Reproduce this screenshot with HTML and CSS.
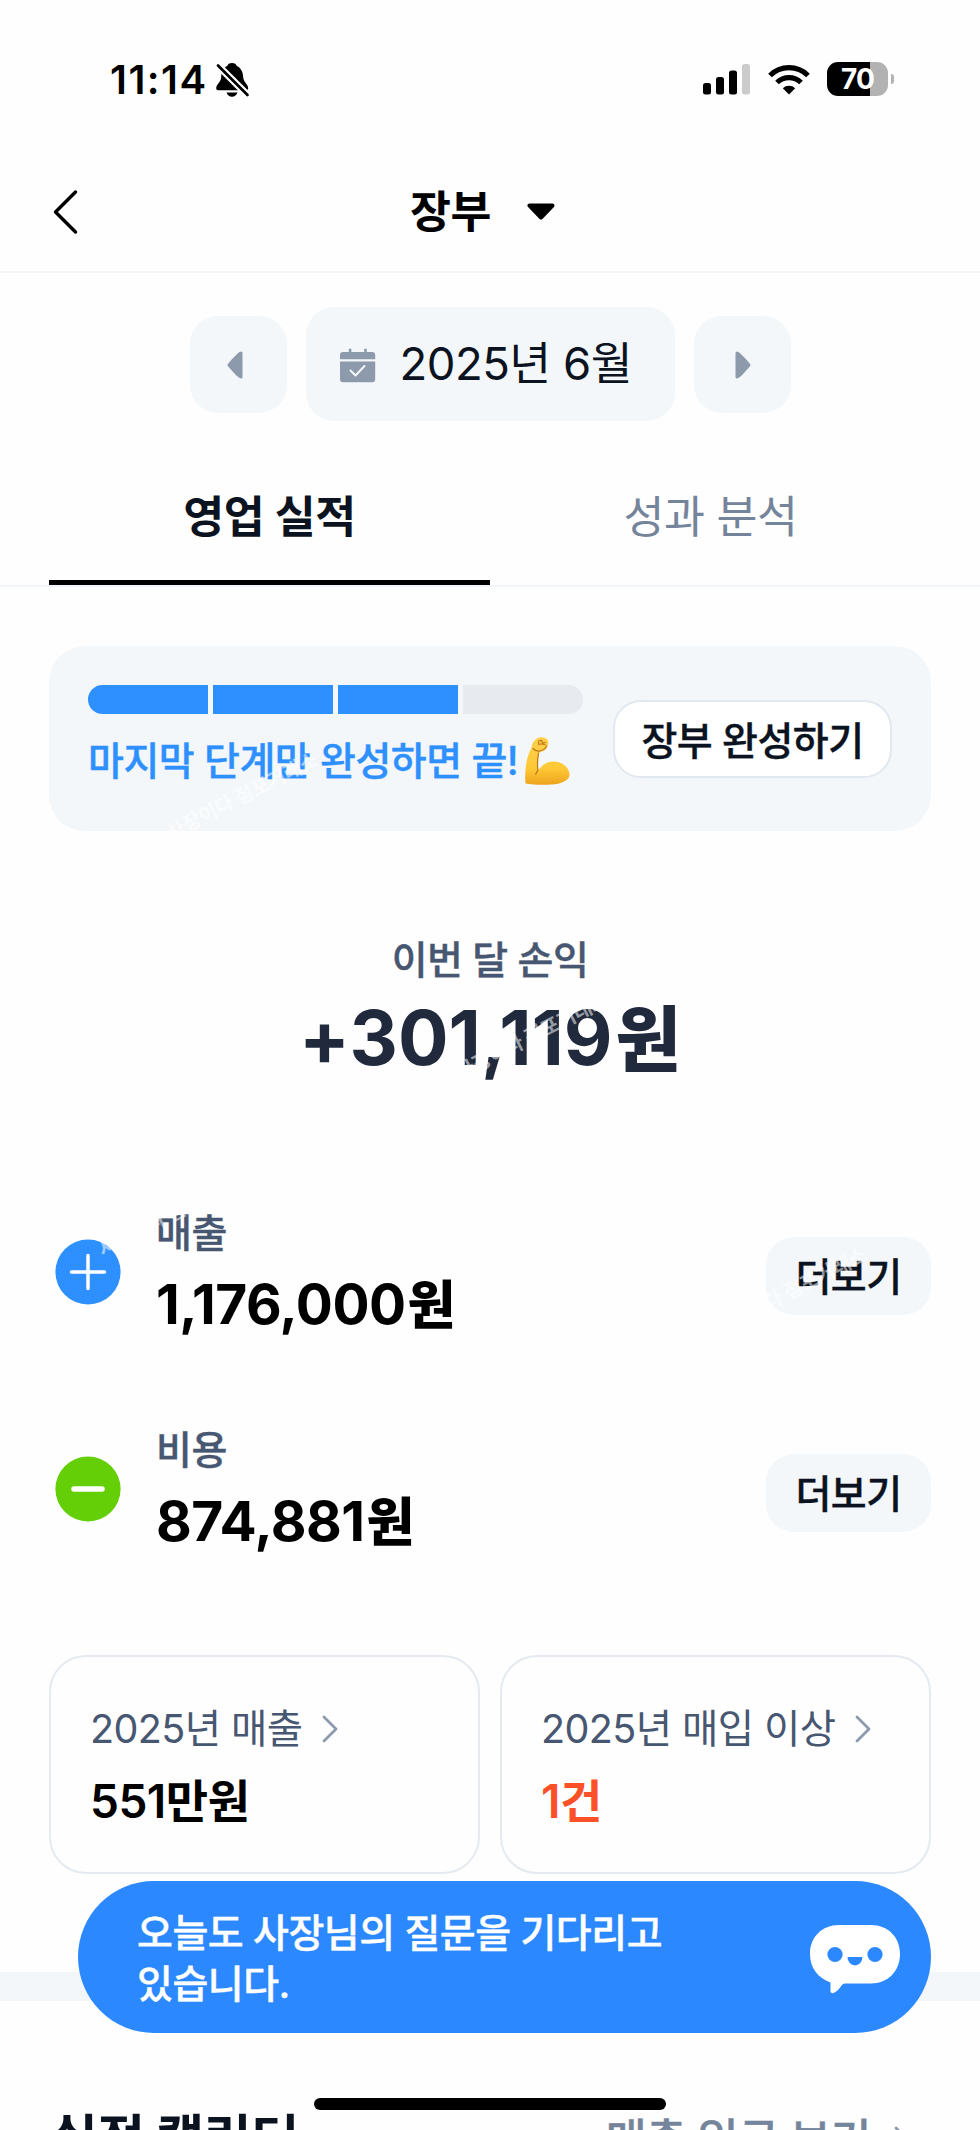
FILE: index.html
```html
<!DOCTYPE html>
<html lang="ko">
<head>
<meta charset="utf-8">
<title>장부</title>
<link rel="stylesheet" href="styles.css">
</head>
<body>
<div class="screen">
  <header class="status">
    <div class="status-left">
      <span class="time">11:14</span>
      <svg class="bell" width="34" height="36" viewBox="0 0 34 36">
        <path d="M16 1c-2.800 0-4 1.300-4.800 3C7 6 5.300 10 5.200 15c0 5-5 7-5 11.200 0 1.300.8 2 2 2h28c1.200 0 2-.7 2-2 0-4.200-5-6.200-5-11.200C27 10 25 6 20.800 4 20 2.300 18.800 1 16 1zM10.500 30.500h11c-.8 2.700-2.800 4.200-5.500 4.200s-4.700-1.500-5.500-4.200z"/>
        <path d="M1 2.500 33 34.500" stroke="#fefefe" stroke-width="7"/>
        <path d="M2 3.500 31.500 33" stroke="#000" stroke-width="2.700" stroke-linecap="round"/>
      </svg>
    </div>
    <div class="status-right">
      <svg width="48" height="31" viewBox="0 0 48 31">
        <rect x="0" y="19" width="8" height="11.500" rx="2.500"/>
        <rect x="13" y="13" width="8" height="17.500" rx="2.500"/>
        <rect x="26" y="6.500" width="8" height="24" rx="2.500"/>
        <rect x="39" y="0" width="8" height="30.500" rx="2.500" fill="#cbcbcb"/>
      </svg>
      <svg class="wifi" width="42" height="31" viewBox="0 0 42 31">
        <g fill="none" stroke="#000" stroke-width="5.200">
          <path d="M2 11.500a27 27 0 0 1 38 0"/>
          <path d="M9 18.500a17 17 0 0 1 24 0"/>
        </g>
        <path d="M14.800 24.200a9 9 0 0 1 12.400 0L21 30.500z"/>
      </svg>
      <div class="battery"><span>70</span></div>
      <i class="nub"></i>
    </div>
  </header>

  <nav class="navbar">
    <svg class="back" width="26" height="46" viewBox="0 0 26 46"><path d="M23.500 3 3.500 23l20 20" fill="none" stroke="#000" stroke-width="3.400" stroke-linecap="round" stroke-linejoin="round"/></svg>
    <h1 class="title">장부</h1>
    <svg class="caret" width="28" height="18" viewBox="0 0 28 18"><path d="M2.500 2.500h23L14 14.500z" stroke="#000" stroke-width="4" stroke-linejoin="round"/></svg>
  </nav>

  <section class="period">
    <button class="step prev"><svg width="16" height="28" viewBox="0 0 16 28"><path d="M14 2v24Q12 26 2 14 12 2 14 2z" class="slate" stroke-width="3" stroke-linejoin="round"/></svg></button>
    <button class="month">
      <svg width="36" height="35" viewBox="0 0 36 35">
        <path d="M8.800 1q1.300-1 2.600 0v3h12.800V1q1.300-1 2.600 0v3h5.400A3 3 0 0 1 35.200 7v4.300H0V7a3 3 0 0 1 3-3h5.800zM0 13.500h35.200V31.200a3 3 0 0 1-3 3H3a3 3 0 0 1-3-3z" fill="#8d9aab"/>
        <path d="m10.500 22.500 5 5 9-9.500" fill="none" stroke="#f3f7fa" stroke-width="2" stroke-linecap="round" stroke-linejoin="round"/>
      </svg>
      <span>2025년 6월</span>
    </button>
    <button class="step next"><svg width="16" height="28" viewBox="0 0 16 28"><path d="M2 2v24Q4 26 14 14 4 2 2 2z" class="slate" stroke-width="3" stroke-linejoin="round"/></svg></button>
  </section>

  <div class="tabs">
    <div class="tab active"><span>영업 실적</span></div>
    <div class="tab"><span>성과 분석</span></div>
  </div>

  <section class="progress-card">
    <div class="progress">
      <div class="bar"><i class="on"></i><i class="on"></i><i class="on"></i><i></i></div>
      <div class="cheer"><span>마지막 단계만 완성하면 끝!</span>
        <svg width="46" height="50" viewBox="0 0 46 50">
          <defs><linearGradient id="skin" x1="0" y1="0" x2="0" y2="1"><stop offset="0" stop-color="#ffd04d"/><stop offset=".65" stop-color="#ffc936"/><stop offset="1" stop-color="#eda31d"/></linearGradient></defs>
          <path d="M1.500 47.500C.5 36 2 21 7.500 12c.2-5 3-9 7.500-10.500 3-1 8.500.5 9 3 .8 3 .3 7-3 9.500-2 1.300-4.500 2-6 3-.8 6-1.500 12.500-.5 17.500 4-6.500 9-9.500 16-9 8 .5 14.500 6 15 12.500.4 5-4.500 8-11.500 9.800C25 49.500 9 49 1.500 47.500z" fill="url(#skin)"/>
          <path d="M14.500 17c-1 6-1.500 12-.5 17.500M14 34.500c-1.300 1-2 2.500-2.300 4M9 12.500c2 2.300 4.500 3 7 2.500 3-.8 6-2.500 6.500-5.500M14.500 5l3-.5 1 2.500 3-.5M16 8l5 .5M14.500 6l.5 3" fill="none" stroke="#bc7818" stroke-width="1.200" stroke-linecap="round"/>
        </svg>
      </div>
    </div>
    <button class="complete">장부 완성하기</button>
  </section>

  <section class="summary">
    <h2>이번 달 손익</h2>
    <p><span>+301,119</span><b>원</b></p>
  </section>

  <section class="flows">
    <div class="flow">
      <svg width="66" height="66" viewBox="0 0 66 66"><circle cx="33" cy="33" r="32.600" fill="#2e90ff"/><path d="M16.500 33h33M33 16.500v33" stroke="#fff" stroke-width="3.500" stroke-linecap="round"/></svg>
      <div class="flow-text"><h3>매출</h3><p><span>1,176,000</span><b>원</b></p></div>
      <button class="more">더보기</button>
    </div>
    <div class="flow">
      <svg width="66" height="66" viewBox="0 0 66 66"><circle cx="33" cy="33" r="32.600" fill="#64cf06"/><path d="M19 33h28" stroke="#fff" stroke-width="5.500" stroke-linecap="round"/></svg>
      <div class="flow-text"><h3>비용</h3><p><span>874,881</span><b>원</b></p></div>
      <button class="more">더보기</button>
    </div>
  </section>

  <section class="year">
    <div class="year-card">
      <div class="year-head"><span>2025년 매출</span><svg width="16" height="28" viewBox="0 0 16 28"><path d="m2 2 12 12L2 26" fill="none" stroke="#8d9aab" stroke-width="2.800" stroke-linecap="round" stroke-linejoin="round"/></svg></div>
      <p>551만원</p>
    </div>
    <div class="year-card alert">
      <div class="year-head"><span>2025년 매입 이상</span><svg width="16" height="28" viewBox="0 0 16 28"><path d="m2 2 12 12L2 26" fill="none" stroke="#8d9aab" stroke-width="2.800" stroke-linecap="round" stroke-linejoin="round"/></svg></div>
      <p>1건</p>
    </div>
  </section>

  <div class="band"></div>

  <section class="calendar">
    <h2>실적 캘린더</h2>
    <a>매출 입금 보기<svg width="16" height="28" viewBox="0 0 16 28"><path d="m2 2 12 12L2 26" fill="none" stroke="#8d9aab" stroke-width="2.800" stroke-linecap="round" stroke-linejoin="round"/></svg></a>
  </section>

  <aside class="chat">
    <p>오늘도 사장님의 질문을 기다리고<br>있습니다.</p>
    <svg width="90" height="70" viewBox="0 0 90 70">
      <path d="M29 0h32c17 0 29 12 29 29S78 58.500 61 58.500H35c-2 0-3 1.500-4.500 3.500-2 2.800-4.500 5-7 6-1.800.7-3-.3-3-2V57.500C8 53 0 43 0 29 0 12 12 0 29 0z" fill="#fff"/>
      <circle cx="25" cy="29.500" r="7.600" fill="#2b88ff"/><circle cx="65" cy="29.500" r="7.600" fill="#2b88ff"/>
      <path d="M37.500 32h15a7.500 8.500 0 0 1-15 0z" fill="#2b88ff"/>
    </svg>
  </aside>
  <div class="home"></div>

  <span class="mark mark-a">사장이다 점포거래소</span>
  <span class="mark mark-b">사장이다 점포거래소</span>
  <span class="mark mark-c">사장이다 점포거래소</span>
  <span class="mark mark-d">사장이다 점포거래소</span>
</div>
</body>
</html>
```

FILE: styles.css
```css
* { box-sizing: border-box; margin: 0; padding: 0; }
body { background: #fefefe; }
button { border: 0; font: inherit; color: inherit; letter-spacing: inherit; }
svg { display: block; flex: none; }
.screen {
  position: relative; width: 980px; height: 2130px; overflow: hidden;
  display: flex; flex-direction: column;
  font-family: Inter, "Noto Sans CJK KR", sans-serif;
  white-space: nowrap; color: #0b1220; letter-spacing: -.5px;
}
.screen > * { flex: none; }

.status { height: 160px; padding: 62px 86px 0 110px; display: flex; justify-content: space-between; align-items: flex-start; }
.status-left, .status-right { display: flex; }
.time { font-size: 40px; font-weight: 600; line-height: 35px; width: 106px; color: #000; letter-spacing: 1.5px; }
.status-right > svg { margin-top: 2px; }
.wifi { margin-left: 17px; }
.battery {
  width: 61px; height: 34px; margin-left: 17px; border-radius: 11px;
  background: linear-gradient(90deg, #000 43px, #b2b2b2 43px);
  color: #fff; font: 700 28px/34px Inter, sans-serif; text-align: center; letter-spacing: -.03em;
}
.nub { width: 3px; height: 10px; margin: 12px 0 0 3px; border-radius: 0 3px 3px 0; background: #b2b2b2; }

.navbar { height: 113px; padding: 0 0 7px 52px; display: flex; align-items: center; border-bottom: 2px solid #f1f5f9; }
.title { margin-left: 332px; width: 117px; font-size: 44.5px; font-weight: 600; line-height: 60px; color: #000; }

.period { height: 175px; padding-top: 34px; display: flex; justify-content: center; align-items: flex-start; gap: 19px; }
.step { width: 97px; height: 97px; margin-top: 9px; border-radius: 28px; background: #f3f7fa; display: flex; align-items: center; justify-content: center; }
.prev { padding-right: 6px; }
.next { padding-left: 2px; }
.slate { fill: #8d9aab; stroke: #8d9aab; }
.month { width: 369px; height: 114px; padding-left: 34px; border-radius: 28px; background: #f3f7fa; display: flex; align-items: center; gap: 24px; font-size: 45.5px; }
.month svg { margin-top: 3px; }
.month span { padding-bottom: 8px; }

.tabs { height: 139px; padding: 0 49px; display: flex; border-bottom: 2px solid #f1f5f9; }
.tab { flex: 1; text-align: center; font-size: 44.5px; line-height: 60px; padding-top: 39px; color: #74849b; }
.active { color: #0b1220; font-weight: 600; border-bottom: 5px solid #000; }

.progress-card { height: 185px; margin: 59px 49px 0; padding: 39px 39px 0 39px; border-radius: 36px; background: #f3f7fa; display: flex; justify-content: space-between; }
.bar { width: 495px; display: flex; gap: 5px; border-radius: 15px; overflow: hidden; }
.bar i { flex: 1; height: 29px; background: #e7ebf0; }
.bar .on { background: #2e90ff; }
.cheer { margin-top: 22px; display: flex; gap: 6px; color: #2e90ff; font-size: 39px; line-height: 50px; }
.complete { width: 279px; height: 78px; margin-top: 15px; padding-bottom: 3px; border: 2px solid #e2e8f0; border-radius: 28px; background: #fff; font-size: 39px; }
.cheer, .complete, .summary h2, .flow h3, .more, .calendar a, .chat p { font-weight: 500; -webkit-text-stroke: .4px currentColor; }

.summary { margin-top: 104px; height: 240px; text-align: center; }
.summary h2 { font-size: 39px; line-height: 50px; color: #475771; }
.summary p { font-size: 75px; font-weight: 700; line-height: 90px; margin-top: 8px; color: #212a3d; letter-spacing: 0; }
.summary b { font-size: 71px; margin-left: 3px; line-height: 1; }

.flow { height: 217px; padding: 0 49px 0 55px; display: flex; }
.flow > svg { margin-top: 64px; }
.flow-text { width: 500px; margin-left: 35px; padding-top: 33px; }
.flow h3 { font-size: 39px; line-height: 50px; color: #475771; }
.flow p { margin-top: 11px; font-size: 55px; font-weight: 700; line-height: 70px; color: #000; }
.flow b { font-size: 52px; margin-left: 2px; line-height: 1; }
.more { margin: 62px 0 0 auto; width: 165px; height: 78px; padding-bottom: 4px; border-radius: 28px; background: #f3f7fa; font-size: 39px; }

.year { margin: 46px 49px 0; display: flex; gap: 20px; }
.year-card { flex: 1; height: 219px; padding: 46px 0 0 39px; border: 2px solid #e4eaf0; border-radius: 37px; }
.year-head { display: flex; align-items: center; gap: 20px; font-size: 39.5px; line-height: 52px; letter-spacing: -.6px; color: #475771; }
.year-card p { margin-top: 16px; font-size: 46px; font-weight: 600; line-height: 60px; color: #000; }
.year-card.alert p { color: #fb5028; }

.band { height: 29px; margin-top: 98px; background: #f3f7fa; }

.calendar { padding: 109px 70px 0 50px; display: flex; justify-content: space-between; align-items: flex-start; }
.calendar h2 { font-size: 52px; font-weight: 700; line-height: 60px; }
.calendar a { display: flex; align-items: center; gap: 23px; font-size: 44.5px; line-height: 60px; color: #74849b; }

.chat { position: absolute; left: 78px; top: 1881px; width: 853px; height: 152px; padding: 26px 31px 0 59px; border-radius: 76px; background: #2b88ff; display: flex; justify-content: space-between; align-items: flex-start; color: #fff; }
.chat p { font-size: 39px; line-height: 51px; }
.chat svg { margin-top: 18px; }
.home { position: absolute; left: 314px; top: 2098px; width: 352px; height: 12px; border-radius: 6px; background: #000; }

.mark { position: absolute; width: 200px; margin: -15px 0 0 -100px; text-align: center; font-size: 20px; font-weight: 700; line-height: 30px; letter-spacing: -.3px; color: rgba(255,255,255,.55); transform: rotate(-27deg); pointer-events: none; }
.mark-a { left: 242px; top: 796px; }
.mark-b { left: 532px; top: 1036px; }
.mark-c { left: 174px; top: 1213px; }
.mark-d { left: 791px; top: 1291px; }
```
